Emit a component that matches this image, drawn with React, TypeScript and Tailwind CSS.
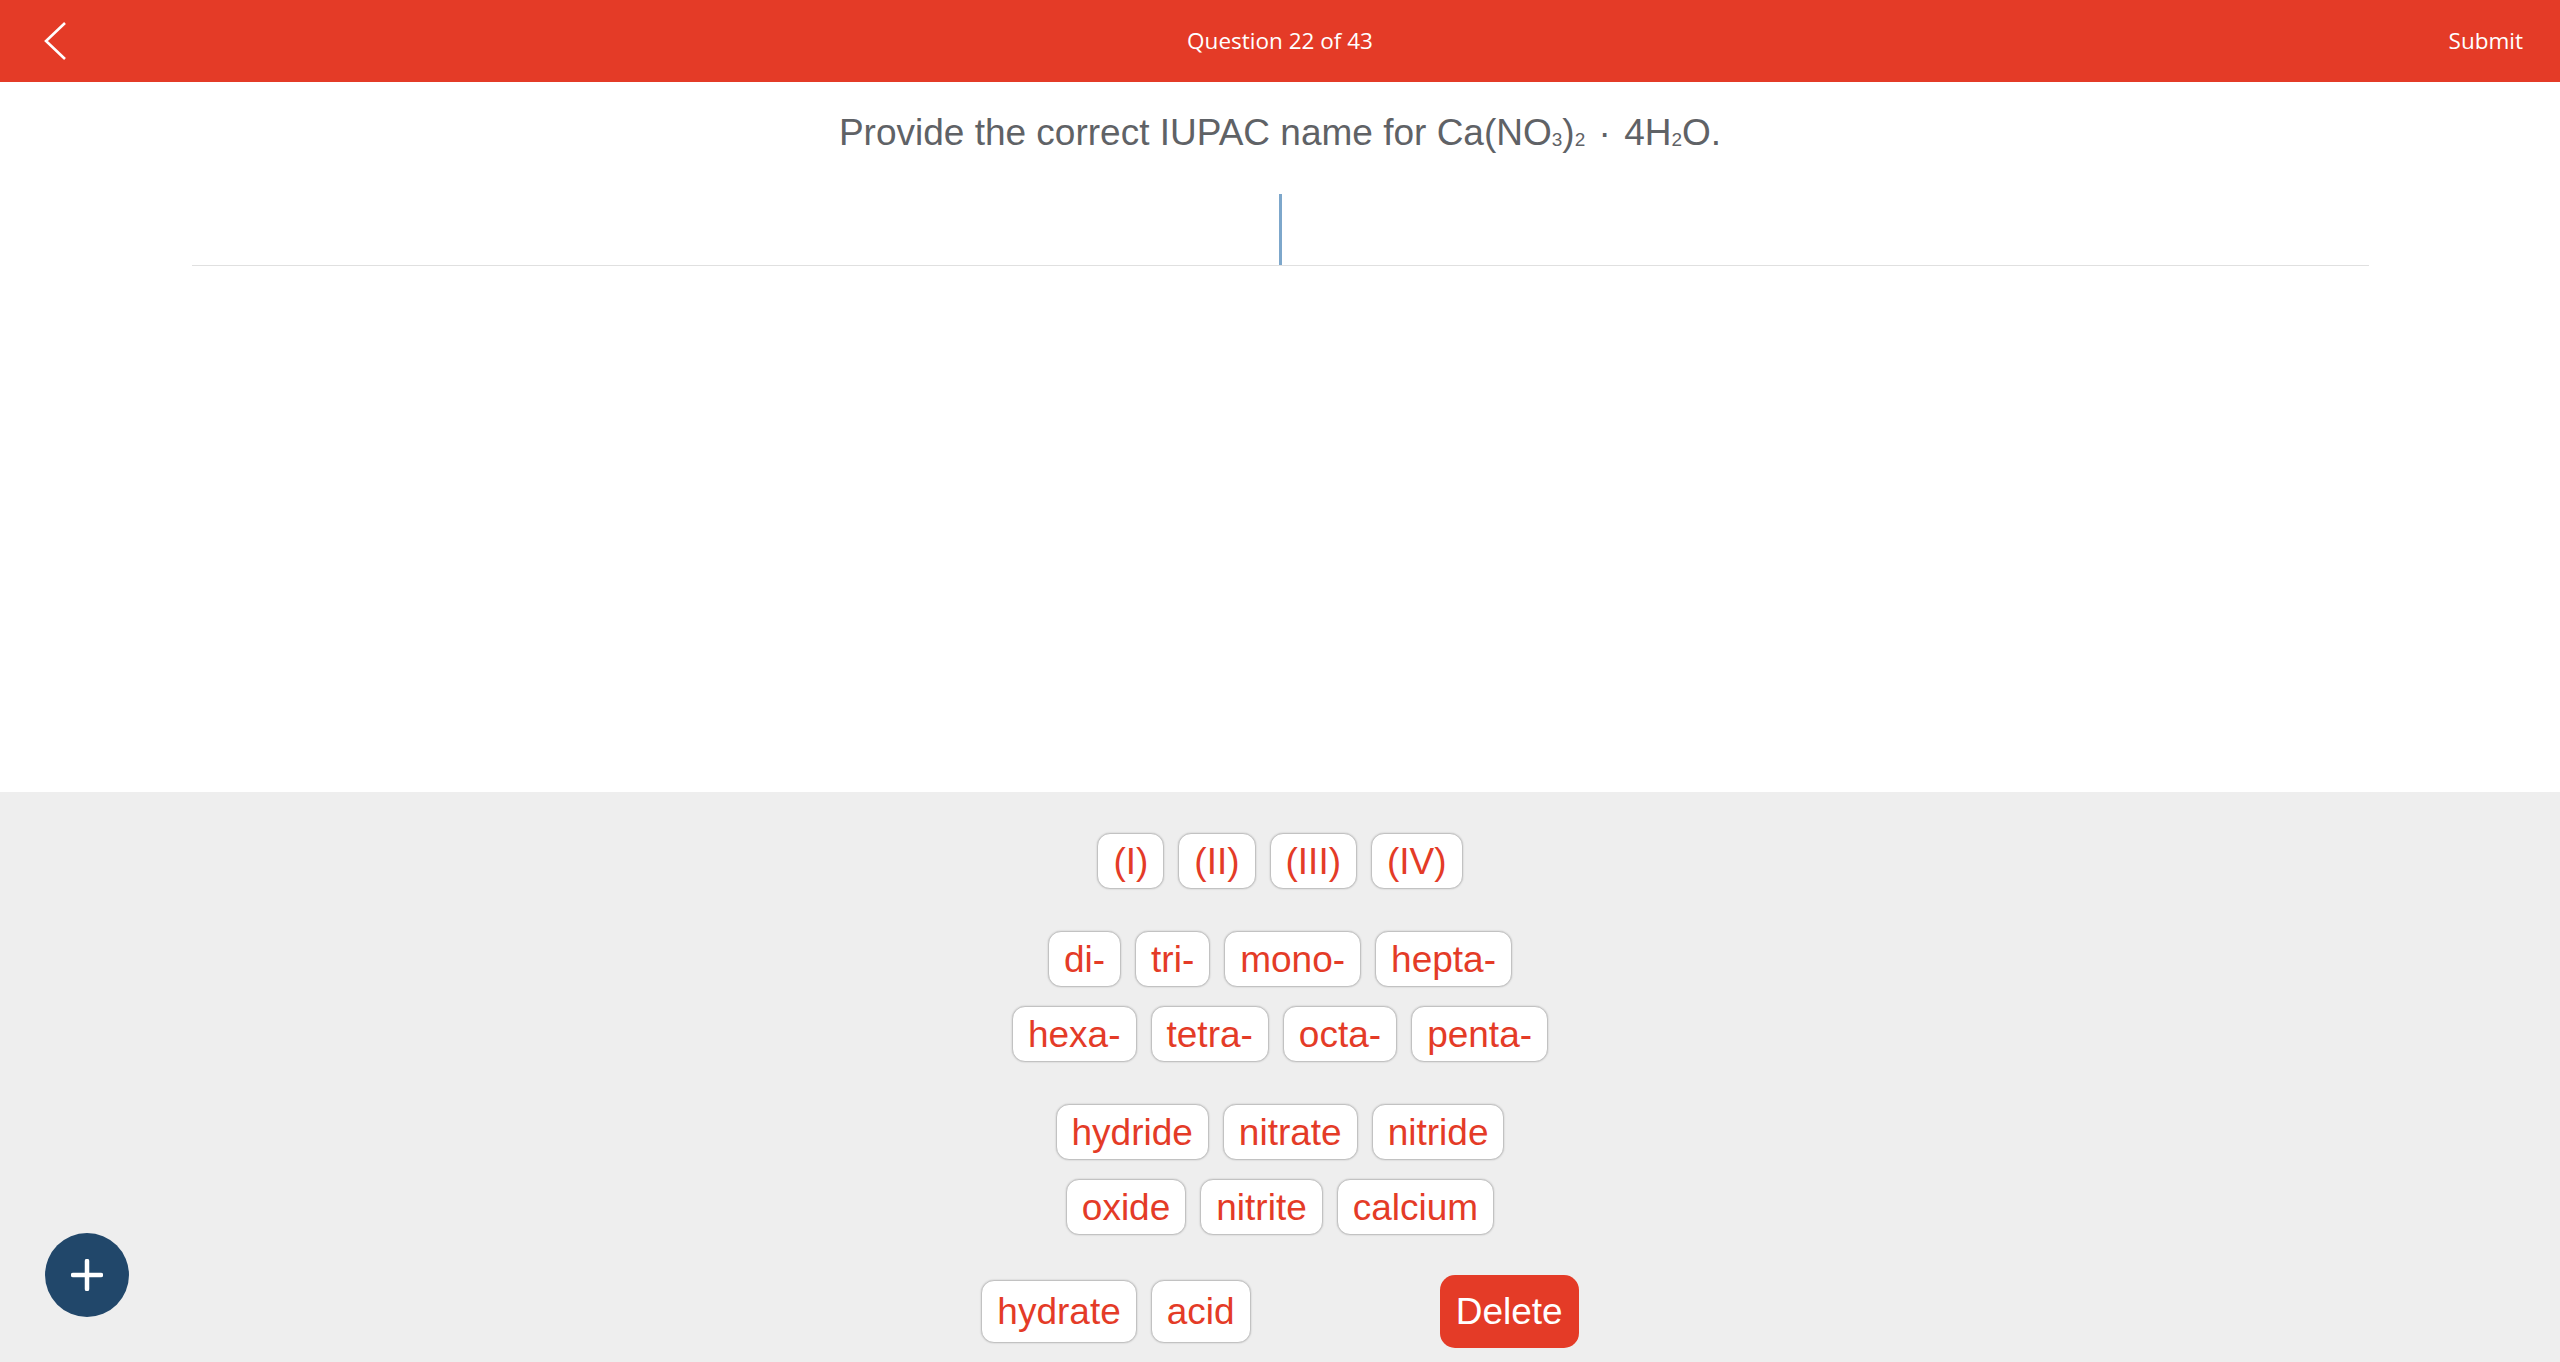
const groups: string[][][] = [
  [["(I)", "(II)", "(III)", "(IV)"]],
  [
    ["di-", "tri-", "mono-", "hepta-"],
    ["hexa-", "tetra-", "octa-", "penta-"],
  ],
  [
    ["hydride", "nitrate", "nitride"],
    ["oxide", "nitrite", "calcium"],
  ],
];

function Chip({ label, tall }: { label: string; tall?: boolean }) {
  return (
    <button
      className={
        "flex items-center rounded-[13px] border border-[#c2c2c2] bg-white px-[15px] font-['Liberation_Sans',Arial,sans-serif] text-[37px] leading-none text-[#e43b27] shadow-[0_0_2px_rgba(0,0,0,0.2)] " +
        (tall ? "h-[63px]" : "h-[56px]")
      }
    >
      {label}
    </button>
  );
}

export default function App() {
  return (
    <div className="relative flex h-screen flex-col font-['Liberation_Sans',Arial,sans-serif]">
      {/* top bar */}
      <header className="flex h-[82px] shrink-0 items-center justify-between bg-[#e43b27] pr-[37px] pl-[44px] font-['Open_Sans',sans-serif] text-[22.5px] text-white">
        <svg width="24" height="40" viewBox="0 0 24 40" fill="none">
          <path d="M21 2 L2 20 L21 38" stroke="white" strokeWidth="2.6" />
        </svg>
        <div className="absolute left-1/2 -translate-x-1/2">Question 22 of 43</div>
        <div>Submit</div>
      </header>

      {/* question */}
      <section className="h-[710px] shrink-0 bg-white">
        <h1 className="mt-[32px] text-center text-[37px] leading-none text-[#5f6266]">
          Provide the correct IUPAC name for Ca(NO
          <span className="relative top-[1px] text-[19px] leading-none">3</span>)
          <span className="relative top-[1px] text-[19px] leading-none">2</span>
          <span className="mx-[3px]"> · </span>4H
          <span className="relative top-[1px] text-[19px] leading-none">2</span>O.
        </h1>
        <div className="mx-auto mt-[43px] flex h-[72px] w-[2177px] justify-center border-b border-[#e0e0e0]">
          <div className="h-[71px] w-[3px] bg-[#7da7cb]" />
        </div>
      </section>

      {/* word bank */}
      <section className="flex flex-1 flex-col items-center bg-[#eeeeee] pt-[41px]">
        {groups.map((rows, gi) => (
          <div key={gi} className="mb-[42px] flex flex-col items-center gap-[19px]">
            {rows.map((row, ri) => (
              <div key={ri} className="flex gap-[14px]">
                {row.map((w) => (
                  <Chip key={w} label={w} />
                ))}
              </div>
            ))}
          </div>
        ))}
        <div className="-mt-[2px] flex items-center gap-[14px]">
          <Chip label="hydrate" tall />
          <Chip label="acid" tall />
          <div className="w-[161px]" />
          <button className="h-[73px] rounded-[15px] bg-[#e43b27] px-[16px] text-[37px] leading-none text-white">
            Delete
          </button>
        </div>
      </section>

      <button className="absolute bottom-[45px] left-[45px] flex h-[84px] w-[84px] items-center justify-center rounded-full bg-[#21476a]">
        <svg width="32" height="32" viewBox="0 0 32 32">
          <path d="M16 2 V30 M2 16 H30" stroke="white" strokeWidth="4.5" strokeLinecap="round" />
        </svg>
      </button>
    </div>
  );
}
